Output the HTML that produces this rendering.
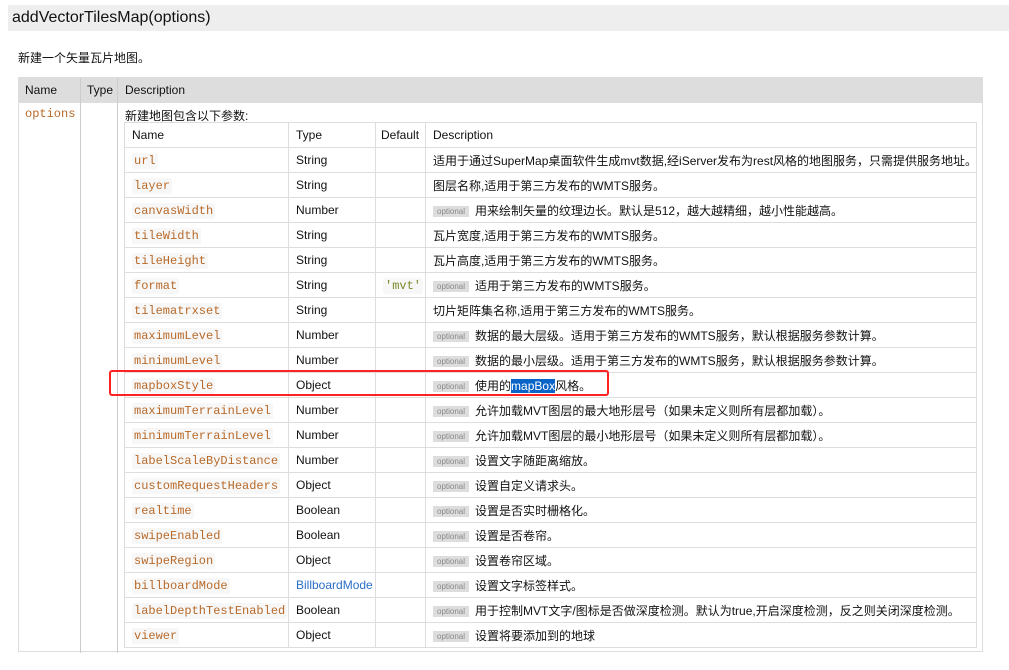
<!DOCTYPE html>
<html><head><meta charset="utf-8"><style>
*{box-sizing:border-box}
body{margin:0;width:1009px;height:670px;background:#fff;font-family:"Liberation Sans","Noto Sans CJK SC",sans-serif;font-size:12px;color:#111;position:relative;overflow:hidden}
.h{position:absolute;left:8px;top:5px;width:1001px;height:26px;background:#eee;font-size:16px;line-height:26px;padding-left:4px;color:#111}
.p{position:absolute;left:18px;top:49px;font-size:12px}
.outer{position:absolute;left:18px;top:77px;width:965px;height:575px;border:1px solid #ddd}
.oh{position:absolute;left:0;top:0;width:963px;height:25px;background:#ddd}
.oh span{position:absolute;top:0;line-height:25px}
.vl{position:absolute;top:0;width:1px;background:#ccc}
.code{font-family:"Liberation Mono",monospace;color:#b86a2a;background:#f7f7f7;padding:1px 2px;border-radius:2px}
.inner{position:absolute;left:124px;top:122px;border-collapse:collapse;table-layout:fixed;width:852px}
.inner td,.inner th{border:1px solid #ddd;height:25px;padding:0 0 0 7px;font-weight:normal;text-align:left;white-space:nowrap;overflow:hidden}
.opt{display:inline-block;background:#ddd;color:#888;font-size:8px;padding:0 4px;height:11px;line-height:11px;margin-right:6px;vertical-align:1px}
.sel{background:#0a64c8;color:#fff}
.red{position:absolute;left:109px;top:370px;width:500px;height:26px;border:2px solid #f22;border-radius:3px}
</style></head><body>
<div class="h">addVectorTilesMap(options)</div>
<div class="p">新建一个矢量瓦片地图。</div>
<div class="outer">
<div class="oh"><span style="left:6px">Name</span><span style="left:68px">Type</span><span style="left:106px">Description</span></div>
<div class="vl" style="left:61px;height:575px"></div>
<div class="vl" style="left:98px;height:575px"></div>
<span class="code" style="position:absolute;left:4px;top:28px;background:none">options</span>
<span style="position:absolute;left:106px;top:29px">新建地图包含以下参数:</span>
</div>
<table class="inner">
<colgroup><col style="width:164px"><col style="width:87px"><col style="width:50px"><col style="width:551px"></colgroup>
<tr><th>Name</th><th>Type</th><th style="padding-left:5px">Default</th><th>Description</th></tr>
<tr><td><span class="code">url</span></td><td>String</td><td></td><td>适用于通过SuperMap桌面软件生成mvt数据,经iServer发布为rest风格的地图服务，只需提供服务地址。</td></tr>
<tr><td><span class="code">layer</span></td><td>String</td><td></td><td>图层名称,适用于第三方发布的WMTS服务。</td></tr>
<tr><td><span class="code">canvasWidth</span></td><td>Number</td><td></td><td><span class="opt">optional</span>用来绘制矢量的纹理边长。默认是512，越大越精细，越小性能越高。</td></tr>
<tr><td><span class="code">tileWidth</span></td><td>String</td><td></td><td>瓦片宽度,适用于第三方发布的WMTS服务。</td></tr>
<tr><td><span class="code">tileHeight</span></td><td>String</td><td></td><td>瓦片高度,适用于第三方发布的WMTS服务。</td></tr>
<tr><td><span class="code">format</span></td><td>String</td><td><span class="code" style="color:#7a8a2a">'mvt'</span></td><td><span class="opt">optional</span>适用于第三方发布的WMTS服务。</td></tr>
<tr><td><span class="code">tilematrxset</span></td><td>String</td><td></td><td>切片矩阵集名称,适用于第三方发布的WMTS服务。</td></tr>
<tr><td><span class="code">maximumLevel</span></td><td>Number</td><td></td><td><span class="opt">optional</span>数据的最大层级。适用于第三方发布的WMTS服务，默认根据服务参数计算。</td></tr>
<tr><td><span class="code">minimumLevel</span></td><td>Number</td><td></td><td><span class="opt">optional</span>数据的最小层级。适用于第三方发布的WMTS服务，默认根据服务参数计算。</td></tr>
<tr><td><span class="code">mapboxStyle</span></td><td>Object</td><td></td><td><span class="opt">optional</span>使用的<span class="sel">mapBox</span>风格。</td></tr>
<tr><td><span class="code">maximumTerrainLevel</span></td><td>Number</td><td></td><td><span class="opt">optional</span>允许加载MVT图层的最大地形层号（如果未定义则所有层都加载）。</td></tr>
<tr><td><span class="code">minimumTerrainLevel</span></td><td>Number</td><td></td><td><span class="opt">optional</span>允许加载MVT图层的最小地形层号（如果未定义则所有层都加载）。</td></tr>
<tr><td><span class="code">labelScaleByDistance</span></td><td>Number</td><td></td><td><span class="opt">optional</span>设置文字随距离缩放。</td></tr>
<tr><td><span class="code">customRequestHeaders</span></td><td>Object</td><td></td><td><span class="opt">optional</span>设置自定义请求头。</td></tr>
<tr><td><span class="code">realtime</span></td><td>Boolean</td><td></td><td><span class="opt">optional</span>设置是否实时栅格化。</td></tr>
<tr><td><span class="code">swipeEnabled</span></td><td>Boolean</td><td></td><td><span class="opt">optional</span>设置是否卷帘。</td></tr>
<tr><td><span class="code">swipeRegion</span></td><td>Object</td><td></td><td><span class="opt">optional</span>设置卷帘区域。</td></tr>
<tr><td><span class="code">billboardMode</span></td><td style="color:#2a6fc9">BillboardMode</td><td></td><td><span class="opt">optional</span>设置文字标签样式。</td></tr>
<tr><td><span class="code">labelDepthTestEnabled</span></td><td>Boolean</td><td></td><td><span class="opt">optional</span>用于控制MVT文字/图标是否做深度检测。默认为true,开启深度检测，反之则关闭深度检测。</td></tr>
<tr><td><span class="code">viewer</span></td><td>Object</td><td></td><td><span class="opt">optional</span>设置将要添加到的地球</td></tr>
</table>
<div class="red"></div>
</body></html>
